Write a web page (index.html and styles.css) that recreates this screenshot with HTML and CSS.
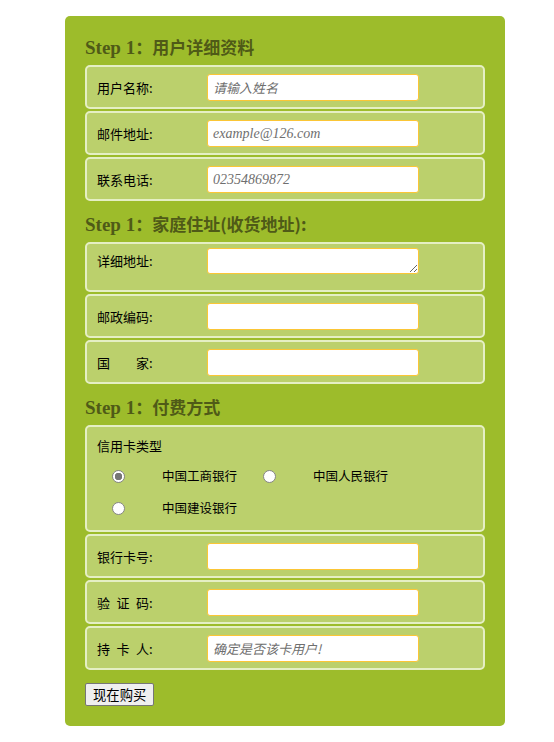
FILE: index.html
```html
<!DOCTYPE html>
<html lang="zh-CN">
<head>
<meta charset="utf-8">
<title>订单表单</title>
<link rel="stylesheet" href="styles.css">
</head>
<body>
<form class="order">
  <h3 class="step"><span class="step-no">Step 1</span>：用户详细资料</h3>
  <div class="row">
    <label class="label">用户名称:</label>
    <input class="field ph-cn" type="text" placeholder="请输入姓名">
  </div>
  <div class="row">
    <label class="label">邮件地址:</label>
    <input class="field ph-en" type="text" placeholder="example@126.com">
  </div>
  <div class="row">
    <label class="label">联系电话:</label>
    <input class="field ph-en" type="text" placeholder="02354869872">
  </div>

  <h3 class="step"><span class="step-no">Step 1</span>：家庭住址(收货地址):</h3>
  <div class="row row-area">
    <label class="label">详细地址:</label>
    <textarea class="field area"></textarea>
  </div>
  <div class="row">
    <label class="label">邮政编码:</label>
    <input class="field" type="text">
  </div>
  <div class="row">
    <label class="label">国　　家:</label>
    <input class="field" type="text">
  </div>

  <h3 class="step"><span class="step-no">Step 1</span>：付费方式</h3>
  <div class="row radios">
    <div class="radio-title">信用卡类型</div>
    <div class="radio-line">
      <label class="radio-item"><input class="radio" type="radio" name="bank" checked><span class="radio-text">中国工商银行</span></label>
      <label class="radio-item"><input class="radio" type="radio" name="bank"><span class="radio-text">中国人民银行</span></label>
    </div>
    <div class="radio-line">
      <label class="radio-item"><input class="radio" type="radio" name="bank"><span class="radio-text">中国建设银行</span></label>
    </div>
  </div>
  <div class="row">
    <label class="label">银行卡号:</label>
    <input class="field" type="text">
  </div>
  <div class="row">
    <label class="label">验&ensp;证&ensp;码:</label>
    <input class="field" type="text">
  </div>
  <div class="row">
    <label class="label">持&ensp;卡&ensp;人:</label>
    <input class="field ph-cn" type="text" placeholder="确定是否该卡用户!">
  </div>
  <button class="buy" type="button">现在购买</button>
</form>
</body>
</html>
```
FILE: styles.css
```css
html, body {
  margin: 0;
  padding: 0;
  background: #ffffff;
}

body {
  font-family: "Noto Sans CJK SC", "Liberation Sans", sans-serif;
  font-size: 13px;
  color: #000;
}

.order {
  width: 400px;
  margin: 16px 0 0 65px;
  padding: 10px 20px 20px;
  background: #9dbc2b;
  border-radius: 5px;
  display: flex;
  flex-direction: column;
  align-items: flex-start;
}

.step {
  margin: 9px 0 7px;
  line-height: 23px;
  height: 23px;
  font-size: 17px;
  font-weight: bold;
  color: #4f5a17;
  font-family: "Noto Sans CJK SC", sans-serif;
}

.step-no {
  font-family: "Liberation Serif", serif;
  font-size: 19px;
  font-weight: bold;
}

.row {
  box-sizing: border-box;
  width: 400px;
  height: 44px;
  margin-bottom: 2px;
  padding: 7px 10px 6px;
  background: #bbd06c;
  border: 2px solid #e5efc4;
  border-radius: 5px;
  display: flex;
  align-items: flex-start;
}

.row-area {
  height: 50px;
  padding-top: 4px;
}

.label {
  width: 110px;
  flex: none;
  line-height: 27px;
  font-size: 13px;
  white-space: pre;
}

.row-area .label {
  line-height: 26px;
}

.field {
  box-sizing: border-box;
  width: 212px;
  height: 27px;
  margin: 0;
  padding: 0 5px;
  border: 1px solid #fbc636;
  border-radius: 3px;
  background: #fff;
  outline: none;
}

.area {
  height: 26px;
  resize: both;
}

.ph-cn {
  font-family: "Noto Sans CJK SC", sans-serif;
  font-size: 13px;
}

.ph-cn::placeholder {
  font-style: italic;
  color: #6f6f6f;
}

.ph-en {
  font-family: "Liberation Serif", serif;
  font-size: 14px;
}

.ph-en::placeholder {
  font-style: italic;
  color: #6f6f6f;
}

.radios {
  height: 107px;
  padding: 9px 10px 6px;
  flex-direction: column;
  align-items: stretch;
}

.radio-title {
  line-height: 20px;
  height: 20px;
  margin-bottom: 4px;
  font-size: 13px;
}

.radio-line {
  height: 32px;
  display: flex;
  align-items: center;
}

.radio-item {
  width: 151px;
  display: flex;
  align-items: center;
}

.radio {
  appearance: none;
  -webkit-appearance: none;
  box-sizing: border-box;
  width: 13px;
  height: 13px;
  margin: 0 37px 0 15px;
  border: 1px solid #858585;
  border-radius: 50%;
  background: #fff;
  flex: none;
}

.radio:checked {
  background: radial-gradient(circle, #767676 0 3.5px, #fff 4px);
}

.radio-text {
  font-size: 12.5px;
  line-height: 20px;
}

.buy {
  margin-top: 11px;
  height: 23px;
  padding: 0 7px;
  font-family: "Noto Sans CJK SC", sans-serif;
  font-size: 13.33px;
  line-height: 20px;
  color: #000;
  background: #efefef;
  border: 1px solid #767676;
  border-radius: 2px;
}
```
